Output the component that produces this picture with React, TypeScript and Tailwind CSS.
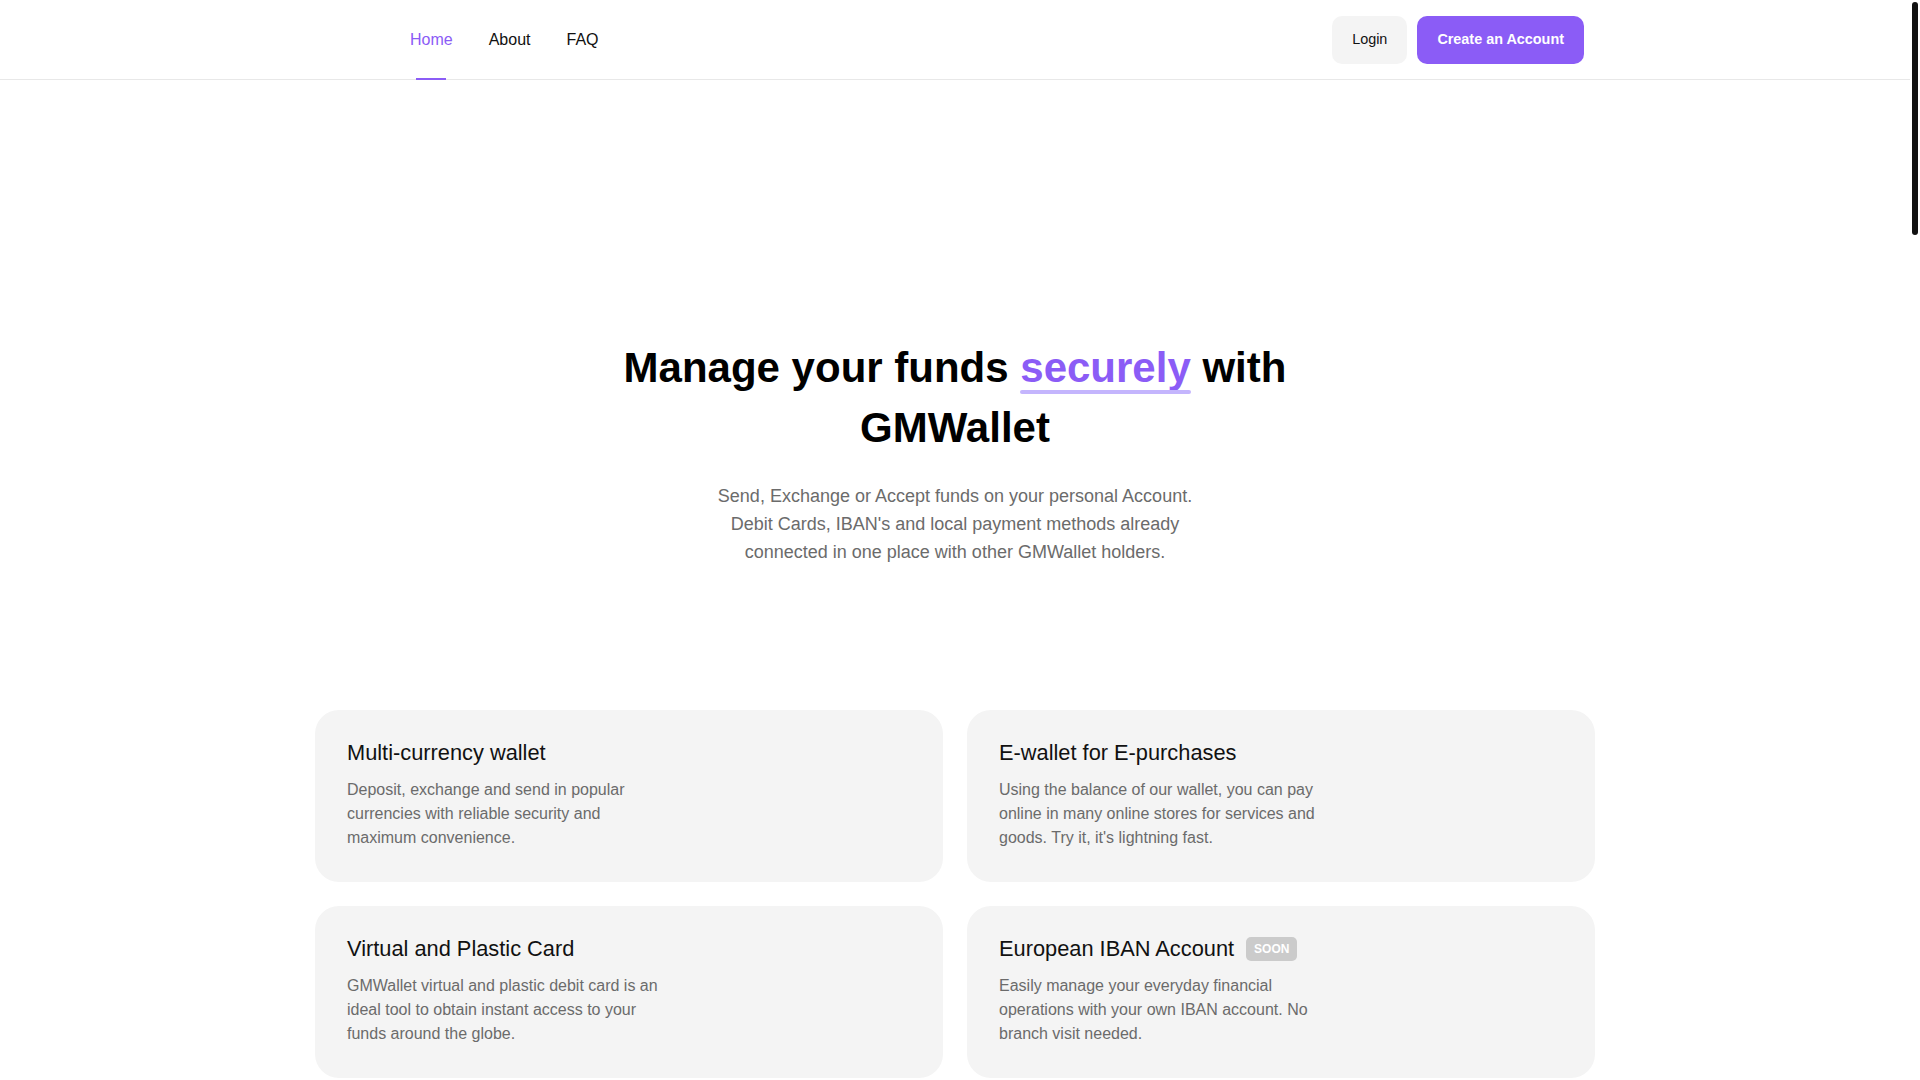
import React from 'react';

const font = { fontFamily: '"Liberation Sans", Arial, Helvetica, sans-serif' };

interface Feature {
  title: string;
  text: string;
  soon?: boolean;
}

const features: Feature[] = [
  {
    title: 'Multi-currency wallet',
    text: 'Deposit, exchange and send in popular currencies with reliable security and maximum convenience.',
  },
  {
    title: 'E-wallet for E-purchases',
    text: "Using the balance of our wallet, you can pay online in many online stores for services and goods. Try it, it's lightning fast.",
  },
  {
    title: 'Virtual and Plastic Card',
    text: 'GMWallet virtual and plastic debit card is an ideal tool to obtain instant access to your funds around the globe.',
  },
  {
    title: 'European IBAN Account',
    text: 'Easily manage your everyday financial operations with your own IBAN account. No branch visit needed.',
    soon: true,
  },
];

const Header: React.FC = () => (
  <header className="border-b border-[#e8e8e8]">
    <div className="mx-auto flex h-[79px] max-w-[1280px] items-center pr-[11px]">
      <div className="w-[95px]" />
      <nav className="flex h-full items-center gap-9 text-base">
        <a className="relative flex h-full items-center text-[#8b5cf6]">
          Home
          <span className="absolute bottom-[-1px] left-1/2 h-[2px] w-[30px] -translate-x-1/2 bg-[#8b5cf6]" />
        </a>
        <a className="text-[#111]">About</a>
        <a className="text-[#111]">FAQ</a>
      </nav>
      <div className="ml-auto flex items-center gap-2.5 text-[0.9rem]">
        <button className="h-12 rounded-[10px] bg-[#f4f4f4] px-5 text-[#111]">Login</button>
        <button className="h-12 rounded-[10px] bg-[#8b5cf6] px-5 font-bold text-white">
          Create an Account
        </button>
      </div>
    </div>
  </header>
);

const FeatureCard: React.FC<{ feature: Feature }> = ({ feature }) => (
  <div className="rounded-3xl bg-[#f4f4f4] px-8 pb-8 pt-7">
    <h3 className="flex items-center text-[21.8px] leading-[30px] text-[#111]">
      {feature.title}
      {feature.soon && (
        <span className="ml-3 flex h-6 items-center rounded-[5px] bg-[#cbcbcb] px-2 text-xs font-bold leading-none text-white">
          SOON
        </span>
      )}
    </h3>
    <p className="mt-2.5 max-w-[320px] text-base leading-6 text-[#6b6b6b]">{feature.text}</p>
  </div>
);

export default function App() {
  return (
    <div style={font} className="h-screen overflow-y-auto bg-white [scrollbar-width:none]">
      <div className="pr-[10px]">
        <Header />
        <main>
          <section className="flex flex-col items-center pt-[258px] text-center">
            <h1 className="max-w-[720px] text-[42px] font-bold leading-[60px] text-black">
              Manage your funds{' '}
              <span className="relative inline-block text-[#8b5cf6]">
                securely
                <span className="absolute bottom-[4px] left-0 right-0 h-1 rounded-full bg-[#c4b5fd]" />
              </span>{' '}
              with GMWallet
            </h1>
            <p className="mt-6 max-w-[500px] text-lg leading-7 text-[#6b6b6b]">
              Send, Exchange or Accept funds on your personal Account. Debit Cards, IBAN's and local
              payment methods already connected in one place with other GMWallet holders.
            </p>
          </section>
          <section className="mx-auto mt-[144px] grid max-w-[1280px] grid-cols-2 gap-6">
            {features.map((f) => (
              <FeatureCard key={f.title} feature={f} />
            ))}
          </section>
          <div className="h-[3880px]" />
        </main>
      </div>
      {/* scrollbar thumb */}
      <div className="fixed right-[2px] top-[2px] h-[233px] w-[6px] rounded-full bg-[#111]" />
    </div>
  );
}
